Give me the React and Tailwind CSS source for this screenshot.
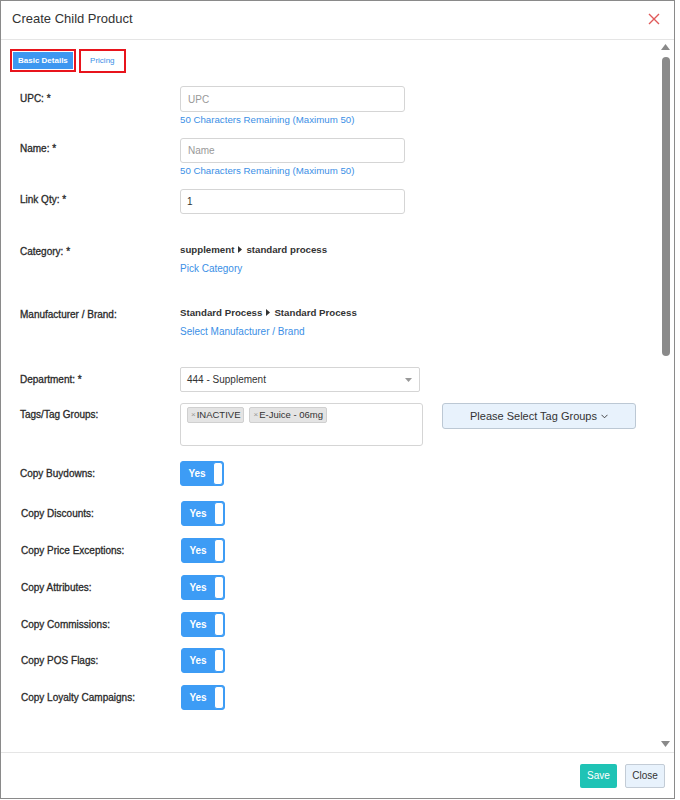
import React from "react";

const Caret = () => (
  <svg width="4" height="7" viewBox="0 0 4 7" className="inline-block mx-[4px] mb-[1px]">
    <path d="M0 0 L4 3.5 L0 7 Z" fill="#333" />
  </svg>
);

function Toggle() {
  return (
    <div className="flex h-[25px] w-[44px] rounded-[3px] border border-[#3d9cf5] bg-[#3d9cf5] overflow-hidden">
      <div className="flex-1 flex items-center justify-center text-white text-[10px] font-bold">Yes</div>
      <div className="w-[10px] bg-white rounded-[3px] border border-[#3d9cf5]"></div>
    </div>
  );
}

const Label = ({ children, className = "" }) => (
  <div className={"w-[160px] shrink-0 text-[10px] text-[#2a2a2a] [-webkit-text-stroke:0.3px_#2a2a2a] " + className}>{children}</div>
);

const Helper = ({ children }) => (
  <div className="text-[9.7px] text-[#3b8fe6] leading-[12px] mt-[2px]">{children}</div>
);

function ToggleRow({ label, h }) {
  return (
    <div className={"flex items-start " + h}>
      <Label className="pt-[5px]">{label}</Label>
      <Toggle />
    </div>
  );
}

export default function App() {
  return (
    <div className="w-[680px] h-[800px] bg-white" style={{ fontFamily: '"Liberation Sans", Arial, sans-serif' }}>
      <div className="w-[675px] h-[799px] border border-[#8a8a8a] bg-white flex flex-col">
        <div className="h-[39px] shrink-0 border-b border-[#e5e5e5] flex items-center justify-between pl-[11px] pr-[14px] pb-[2px]">
          <div className="text-[13px] text-[#333]">Create Child Product</div>
          <svg width="12" height="12" viewBox="0 0 12 12">
            <path d="M1 1 L11 11 M11 1 L1 11" stroke="#e05a5a" strokeWidth="1.4" />
          </svg>
        </div>
        <div className="flex flex-1 min-h-0">
          <div className="flex-1 pl-[19px] pt-[9px]">
            <div className="flex items-start gap-[3px] h-[37px] -ml-[10px]">
              <div className="border-2 border-[#e8141c] p-px">
                <div className="bg-[#3d97f0] text-white text-[8px] font-bold px-[5px] h-[17px] flex items-center">Basic Details</div>
              </div>
              <div className="border-2 border-[#e8141c] w-[47px] h-[24px] flex items-center justify-center text-[8px] text-[#3b8fe6]">
                Pricing
              </div>
            </div>

            <div className="flex items-start h-[52px]">
              <Label className="pt-[5px]">UPC: *</Label>
              <div>
                <div className="w-[225px] h-[26px] border border-[#d5d5d5] rounded-[3px] flex items-center px-[7px] text-[10px] text-[#999]">UPC</div>
                <Helper>50 Characters Remaining (Maximum 50)</Helper>
              </div>
            </div>

            <div className="flex items-start h-[51px]">
              <Label className="pt-[3px]">Name: *</Label>
              <div>
                <div className="w-[225px] h-[25px] border border-[#d5d5d5] rounded-[3px] flex items-center px-[7px] text-[10px] text-[#999]">Name</div>
                <Helper>50 Characters Remaining (Maximum 50)</Helper>
              </div>
            </div>

            <div className="flex items-start h-[54px]">
              <Label className="pt-[3px]">Link Qty: *</Label>
              <div className="w-[225px] h-[25px] border border-[#d5d5d5] rounded-[3px] flex items-center px-[6px] text-[10px] text-[#333]">1</div>
            </div>

            <div className="flex items-start h-[64px] pt-px">
              <Label>Category: *</Label>
              <div>
                <div className="text-[9.7px] font-bold text-[#333] leading-[12px]">supplement<Caret />standard process</div>
                <div className="text-[10px] text-[#3b8fe6] leading-[12px] mt-[7px]">Pick Category</div>
              </div>
            </div>

            <div className="flex items-start h-[60px]">
              <Label>Manufacturer / Brand:</Label>
              <div>
                <div className="text-[9.7px] font-bold text-[#333] leading-[12px]">Standard Process<Caret />Standard Process</div>
                <div className="text-[10px] text-[#3b8fe6] leading-[12px] mt-[7px]">Select Manufacturer / Brand</div>
              </div>
            </div>

            <div className="flex items-start h-[36px]">
              <Label className="pt-[5px]">Department: *</Label>
              <div className="w-[240px] h-[25px] border border-[#d5d5d5] rounded-[2px] flex items-center justify-between pl-[6px] pr-[7px] text-[10px] text-[#333]">
                <span>444 - Supplement</span>
                <svg width="7" height="4" viewBox="0 0 7 4"><path d="M0 0 L7 0 L3.5 4 Z" fill="#999" /></svg>
              </div>
            </div>

            <div className="flex items-start h-[58px]">
              <Label className="pt-[4px]">Tags/Tag Groups:</Label>
              <div className="w-[243px] h-[43px] border border-[#d5d5d5] rounded-[3px] flex items-start gap-[5px] pl-[6px] pt-[3px]">
                <div className="h-[16px] bg-[#e4e4e4] border border-[#d0d0d0] rounded-[2px] px-[3px] flex items-center text-[9.5px] text-[#333]">
                  <span className="text-[#999] text-[8px] mr-[1px]">×</span>INACTIVE
                </div>
                <div className="h-[16px] bg-[#e4e4e4] border border-[#d0d0d0] rounded-[2px] px-[3px] flex items-center text-[9.5px] text-[#333]">
                  <span className="text-[#999] text-[8px] mr-[1px]">×</span>E-Juice - 06mg
                </div>
              </div>
              <div className="ml-[19px] w-[194px] h-[26px] bg-[#e8f2fc] border border-[#bcc8d4] rounded-[3px] flex items-center justify-center text-[11px] text-[#333]">
                Please Select Tag Groups
                <svg width="7" height="5" viewBox="0 0 7 5" className="ml-[4px]"><path d="M0.5 0.8 L3.5 3.8 L6.5 0.8" stroke="#333" strokeWidth="0.9" fill="none" /></svg>
              </div>
            </div>

            <ToggleRow label="Copy Buydowns:" h="h-[40px]" />
            <div className="pl-px">
              <ToggleRow label="Copy Discounts:" h="h-[37px]" />
              <ToggleRow label="Copy Price Exceptions:" h="h-[37px]" />
              <ToggleRow label="Copy Attributes:" h="h-[37px]" />
              <ToggleRow label="Copy Commissions:" h="h-[36px]" />
              <ToggleRow label="Copy POS Flags:" h="h-[37px]" />
              <ToggleRow label="Copy Loyalty Campaigns:" h="h-[37px]" />
            </div>
          </div>
          <div className="w-[13px] mr-[2px] flex flex-col items-center pt-[4px] pb-[5px]">
            <svg width="9" height="6" viewBox="0 0 9 6"><path d="M0 6 L4.5 0 L9 6 Z" fill="#8a8a8a" /></svg>
            <div className="w-[8px] h-[299px] mt-[7px] bg-[#8a8a8a] rounded-full"></div>
            <div className="flex-1"></div>
            <svg width="9" height="6" viewBox="0 0 9 6"><path d="M0 0 L9 0 L4.5 6 Z" fill="#8a8a8a" /></svg>
          </div>
        </div>
        <div className="h-[46px] shrink-0 border-t border-[#e5e5e5] flex items-center justify-end gap-[8px] pr-[9px]">
          <div className="w-[37px] h-[24px] bg-[#1fc3b5] rounded-[2px] text-white text-[10px] flex items-center justify-center">Save</div>
          <div className="w-[40px] h-[24px] bg-[#e8f2fc] border border-[#c3ccd6] rounded-[2px] text-[#333] text-[10px] flex items-center justify-center">Close</div>
        </div>
      </div>
    </div>
  );
}
